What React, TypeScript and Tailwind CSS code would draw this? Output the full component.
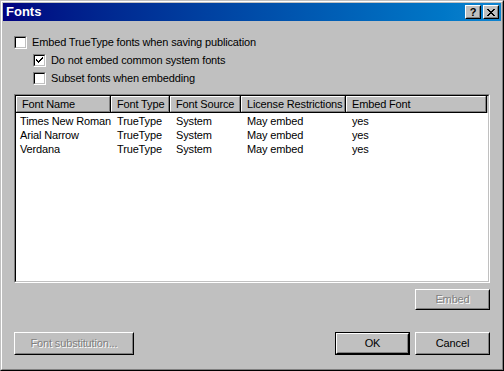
import React from "react";

const font = { fontFamily: '"Liberation Sans", Arial, sans-serif' };

function Check({ checked }: { checked?: boolean }) {
  return (
    <div className="w-[13px] h-[13px] border border-t-[#808080] border-l-[#808080] border-r-white border-b-white shrink-0">
      <div className="w-full h-full border border-t-black border-l-black border-r-[#c0c0c0] border-b-[#c0c0c0] bg-white flex items-center justify-center">
        {checked && (
          <svg width="7" height="7" viewBox="0 0 7 7" shapeRendering="crispEdges">
            <path d="M0 2h1v3h1v1h1v-1h1v-1h1v-1h1v-1h1v-2h-1v1h-1v1h-1v1h-1v1h-1v-1h-1v-1h-1z" fill="black" />
            <path d="M0 2h1v1h-1zM0 3h1v1h-1z" fill="black" />
          </svg>
        )}
      </div>
    </div>
  );
}

function Btn({
  children,
  w,
  h,
  disabled,
  def,
}: {
  children: React.ReactNode;
  w: string;
  h: string;
  disabled?: boolean;
  def?: boolean;
}) {
  const inner = (
    <div className="flex-1 flex border border-t-white border-l-white border-r-black border-b-black">
      <div
        className={
          "flex-1 flex items-center justify-center border border-t-[#c0c0c0] border-l-[#c0c0c0] border-r-[#808080] border-b-[#808080] text-[11px] " +
          (disabled ? "text-[#808080] [text-shadow:1px_1px_0_#fff]" : "text-black")
        }
      >
        {children}
      </div>
    </div>
  );
  return (
    <div className={`${w} ${h} flex ${def ? "border border-black" : ""}`}>{inner}</div>
  );
}

const cols = [
  { name: "Font Name", w: "w-[95px]" },
  { name: "Font Type", w: "w-[59px]" },
  { name: "Font Source", w: "w-[71px]" },
  { name: "License Restrictions", w: "w-[105px]" },
  { name: "Embed Font", w: "w-[141px]" },
];

const rows = [
  ["Times New Roman", "TrueType", "System", "May embed", "yes"],
  ["Arial Narrow", "TrueType", "System", "May embed", "yes"],
  ["Verdana", "TrueType", "System", "May embed", "yes"],
];

export default function App() {
  return (
    <div
      style={font}
      className="w-[504px] h-[371px] bg-[#c0c0c0] border border-t-[#c0c0c0] border-l-[#c0c0c0] border-r-black border-b-black text-black text-[11px] tracking-[-0.15px]"
    >
      <div className="w-full h-full border border-t-white border-l-white border-r-[#808080] border-b-[#808080] p-px flex flex-col">
        {/* Title bar */}
        <div className="h-[18px] flex items-center bg-gradient-to-r from-[#000080] to-[#1084d0] pl-[3px] pr-[2px]">
          <span className="text-white font-bold text-[13px] tracking-[0px]">Fonts</span>
          <div className="ml-auto flex gap-[2px]">
            <div className="w-[16px] h-[14px] flex border border-t-white border-l-white border-r-black border-b-black bg-[#c0c0c0]">
              <div className="flex-1 flex items-center justify-center border border-t-[#c0c0c0] border-l-[#c0c0c0] border-r-[#808080] border-b-[#808080] font-bold text-[11px] leading-none tracking-[0px]">
                ?
              </div>
            </div>
            <div className="w-[16px] h-[14px] flex border border-t-white border-l-white border-r-black border-b-black bg-[#c0c0c0]">
              <div className="flex-1 flex items-center justify-center border border-t-[#c0c0c0] border-l-[#c0c0c0] border-r-[#808080] border-b-[#808080]">
                <svg width="8" height="7" viewBox="0 0 8 7" shapeRendering="crispEdges">
                  <path d="M0 0h2v1h1v1h2v-1h1v-1h2v1h-1v1h-1v1h-1v1h1v1h1v1h1v1h-2v-1h-1v-1h-2v1h-1v1h-2v-1h1v-1h1v-1h1v-1h-1v-1h-1v-1h-1z" fill="black" />
                </svg>
              </div>
            </div>
          </div>
        </div>

        {/* Content */}
        <div className="flex-1 flex flex-col px-[11px] pt-[12px]">
          <div className="h-[18px] flex items-center gap-[5px]">
            <Check />
            <span>Embed TrueType fonts when saving publication</span>
          </div>
          <div className="h-[18px] flex items-center gap-[5px] pl-[19px]">
            <Check checked />
            <span>Do not embed common system fonts</span>
          </div>
          <div className="h-[18px] flex items-center gap-[5px] pl-[19px]">
            <Check />
            <span>Subset fonts when embedding</span>
          </div>

          {/* List view */}
          <div className="mt-[7px] h-[189px] border border-t-[#808080] border-l-[#808080] border-r-white border-b-white">
            <div className="w-full h-full border border-t-black border-l-black border-r-[#c0c0c0] border-b-[#c0c0c0] bg-white flex flex-col">
              <div className="flex h-[17px] bg-[#c0c0c0]">
                {cols.map((c) => (
                  <div
                    key={c.name}
                    className={`${c.w} shrink-0 flex border-r border-b border-r-black border-b-black`}
                  >
                    <div className="flex-1 flex items-center pl-[5px] border border-t-white border-l-white border-r-[#808080] border-b-[#808080] whitespace-nowrap overflow-hidden">
                      {c.name}
                    </div>
                  </div>
                ))}
              </div>
              <div className="flex flex-col pt-[1px]">
                {rows.map((r, i) => (
                  <div key={i} className="flex h-[14px] items-center">
                    {r.map((cell, j) => (
                      <div
                        key={j}
                        className={`${cols[j].w} shrink-0 whitespace-nowrap ${j === 0 ? "pl-[4px]" : "pl-[6px]"}`}
                      >
                        {cell}
                      </div>
                    ))}
                  </div>
                ))}
              </div>
            </div>
          </div>

          <div className="flex justify-end mt-[6px]">
            <Btn w="w-[75px]" h="h-[21px]" disabled>
              Embed
            </Btn>
          </div>

          <div className="flex items-center mt-[22px]">
            <Btn w="w-[120px]" h="h-[23px]" disabled>
              Font substitution...
            </Btn>
            <div className="ml-auto flex gap-[5px]">
              <Btn w="w-[75px]" h="h-[23px]" def>
                OK
              </Btn>
              <Btn w="w-[75px]" h="h-[23px]">
                Cancel
              </Btn>
            </div>
          </div>
        </div>
      </div>
    </div>
  );
}
